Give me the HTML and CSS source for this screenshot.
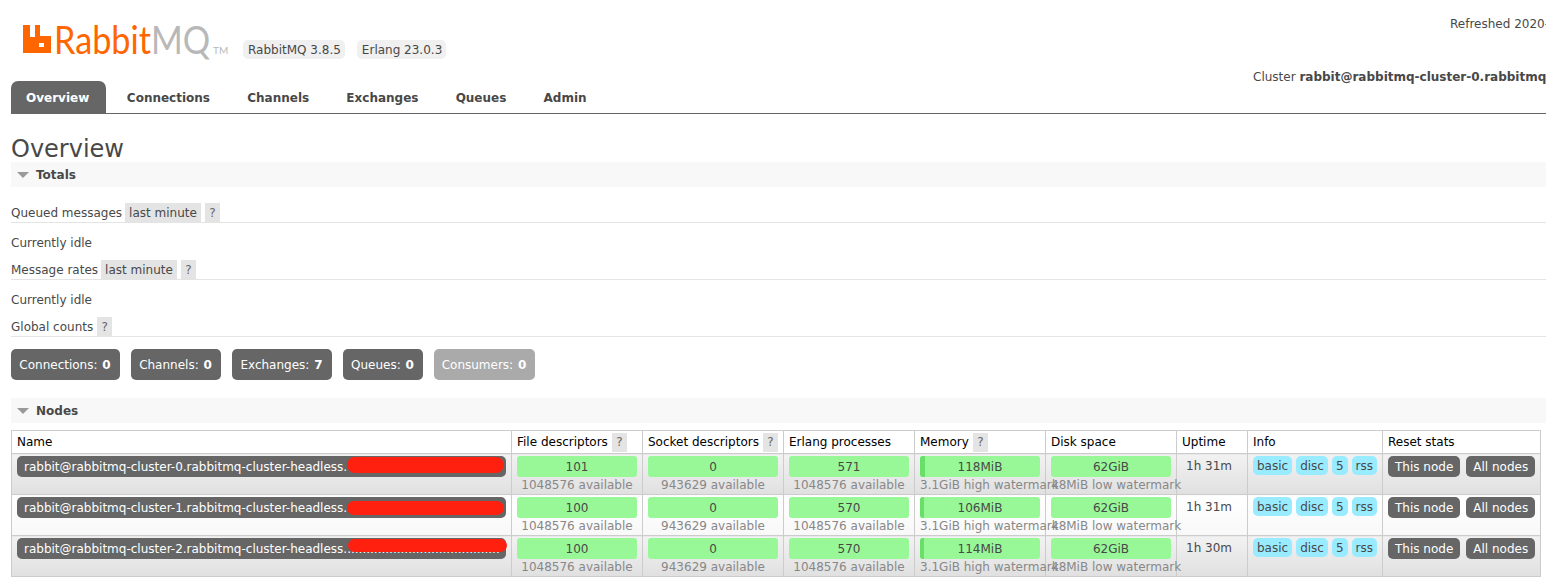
FILE: index.html
```html
<!DOCTYPE html>
<html lang="en">
<head>
<meta charset="utf-8">
<title>RabbitMQ Management</title>
<link rel="stylesheet" href="styles.css">
</head>
<body>
<div class="page">
  <header class="header">
    <div class="logo">
      <svg class="logo-icon" width="28" height="28" viewBox="0 0 28 28"><path fill="#ff6600" fill-rule="evenodd" d="M0 0h7v12h5V0h5v11h11v17H0z M16 18v4h5v-4z"/></svg>
      <span class="logo-word"><span class="logo-rabbit">Rabbit</span><span class="logo-mq">MQ</span></span><span class="logo-tm">TM</span>
    </div>
    <div class="versions">
      <span class="version">RabbitMQ 3.8.5</span>
      <span class="version">Erlang 23.0.3</span>
    </div>
    <div class="refreshed">Refreshed 2020-07-14 10:32:11</div>
  </header>
  <div class="cluster">Cluster <b>rabbit@rabbitmq-cluster-0.rabbitmq-cluster-headless</b></div>
  <nav class="tabs">
    <a class="tab active">Overview</a>
    <a class="tab">Connections</a>
    <a class="tab">Channels</a>
    <a class="tab">Exchanges</a>
    <a class="tab">Queues</a>
    <a class="tab">Admin</a>
  </nav>
  <main class="content">
    <h1 class="title">Overview</h1>
    <h2 class="section"><span class="arrow"></span>Totals</h2>
    <div class="sub first"><span>Queued messages</span><span class="tag">last minute</span><span class="help">?</span></div>
    <p class="idle">Currently idle</p>
    <div class="sub"><span>Message rates</span><span class="tag">last minute</span><span class="help">?</span></div>
    <p class="idle">Currently idle</p>
    <div class="sub"><span>Global counts</span><span class="help">?</span></div>
    <div class="counts">
      <span class="count">Connections: <b>0</b></span>
      <span class="count">Channels: <b>0</b></span>
      <span class="count">Exchanges: <b>7</b></span>
      <span class="count">Queues: <b>0</b></span>
      <span class="count light">Consumers: <b>0</b></span>
    </div>
    <h2 class="section nodes"><span class="arrow"></span>Nodes</h2>
    <table class="table">
      <colgroup>
        <col class="c-name"><col class="c-file"><col class="c-sock"><col class="c-erl"><col class="c-mem"><col class="c-disk"><col class="c-up"><col class="c-info"><col class="c-reset">
      </colgroup>
      <thead>
        <tr>
          <th>Name</th>
          <th><span>File descriptors</span><span class="help">?</span></th>
          <th><span>Socket descriptors</span><span class="help">?</span></th>
          <th>Erlang processes</th>
          <th><span>Memory</span><span class="help">?</span></th>
          <th>Disk space</th>
          <th>Uptime</th>
          <th>Info</th>
          <th>Reset stats</th>
        </tr>
      </thead>
      <tbody>
        <tr class="alt">
          <td><div class="node"><span class="node-text">rabbit@rabbitmq-cluster-0.rabbitmq-cluster-headless.</span><span class="redact r0"></span></div></td>
          <td><div class="bar">101</div><div class="sub-val">1048576 available</div></td>
          <td><div class="bar">0</div><div class="sub-val">943629 available</div></td>
          <td><div class="bar">571</div><div class="sub-val">1048576 available</div></td>
          <td><div class="bar mem"><span class="fill" style="width:5px"></span><span class="bar-label">118MiB</span></div><div class="sub-val wide">3.1GiB high watermark</div></td>
          <td><div class="bar disk">62GiB</div><div class="sub-val wide">48MiB low watermark</div></td>
          <td class="uptime">1h 31m</td>
          <td><div class="infos"><span class="info">basic</span><span class="info">disc</span><span class="info">5</span><span class="info">rss</span></div></td>
          <td><div class="resets"><span class="reset">This node</span><span class="reset">All nodes</span></div></td>
        </tr>
        <tr>
          <td><div class="node"><span class="node-text">rabbit@rabbitmq-cluster-1.rabbitmq-cluster-headless.</span><span class="redact r1"></span></div></td>
          <td><div class="bar">100</div><div class="sub-val">1048576 available</div></td>
          <td><div class="bar">0</div><div class="sub-val">943629 available</div></td>
          <td><div class="bar">570</div><div class="sub-val">1048576 available</div></td>
          <td><div class="bar mem"><span class="fill" style="width:4px"></span><span class="bar-label">106MiB</span></div><div class="sub-val wide">3.1GiB high watermark</div></td>
          <td><div class="bar disk">62GiB</div><div class="sub-val wide">48MiB low watermark</div></td>
          <td class="uptime">1h 31m</td>
          <td><div class="infos"><span class="info">basic</span><span class="info">disc</span><span class="info">5</span><span class="info">rss</span></div></td>
          <td><div class="resets"><span class="reset">This node</span><span class="reset">All nodes</span></div></td>
        </tr>
        <tr class="alt">
          <td><div class="node"><span class="node-text">rabbit@rabbitmq-cluster-2.rabbitmq-cluster-headless.........................................</span><span class="redact r2"></span></div></td>
          <td><div class="bar">100</div><div class="sub-val">1048576 available</div></td>
          <td><div class="bar">0</div><div class="sub-val">943629 available</div></td>
          <td><div class="bar">570</div><div class="sub-val">1048576 available</div></td>
          <td><div class="bar mem"><span class="fill" style="width:4px"></span><span class="bar-label">114MiB</span></div><div class="sub-val wide">3.1GiB high watermark</div></td>
          <td><div class="bar disk">62GiB</div><div class="sub-val wide">48MiB low watermark</div></td>
          <td class="uptime">1h 30m</td>
          <td><div class="infos"><span class="info">basic</span><span class="info">disc</span><span class="info">5</span><span class="info">rss</span></div></td>
          <td><div class="resets"><span class="reset">This node</span><span class="reset">All nodes</span></div></td>
        </tr>
      </tbody>
    </table>
  </main>
</div>
</body>
</html>
```
FILE: styles.css
```css
html, body { margin: 0; padding: 0; background: #fff; overflow: hidden; }
body { font: 12px "DejaVu Sans", Verdana, sans-serif; color: #484848; }
.page { width: 1546px; height: 577px; overflow: hidden; }

.header { display: flex; height: 62px; align-items: flex-start; white-space: nowrap; }
.logo { display: flex; align-items: flex-start; margin: 25px 0 0 23px; width: 220px; height: 30px; flex: none; }
.logo-icon { flex: none; margin-right: 3px; }
.logo-word { display: block; width: 155px; flex: none; transform: scaleX(0.9); transform-origin: left center; font: 400 38px/28px Lato, "Open Sans", sans-serif; }
.logo-rabbit { color: #ff6600; }
.logo-mq { color: #b8b8b8; }
.logo-tm { font: 400 10px/10px Lato, sans-serif; color: #b8b8b8; margin: 20px 0 0 4px; }
.versions { display: flex; gap: 12px; margin-top: 40px; width: 1207px; flex: none; }
.version { background: #f0f0f0; border-radius: 5px; padding: 0 4px 0 5px; line-height: 20px; height: 19px; }
.refreshed { margin-top: 17px; width: 0; }

.cluster { height: 19px; line-height: 19px; white-space: nowrap; margin: 6px 0 0 1253px; }

.tabs { display: flex; margin: -6px 0 0 11px; height: 32px; border-bottom: 1px solid #666; }
.tab { font-weight: bold; line-height: 34px; padding: 0 18.600px; color: #484848; }
.tab.active { background: #666; color: #fff; border-radius: 7px 7px 0 0; padding: 0 17px 0 15px; margin-right: 2px; }

.content { padding: 0 0 0 11px; }
.title { font-size: 24px; font-weight: normal; line-height: 26px; margin: 22px 0 0; color: #484848; }
.section { font-size: 12px; font-weight: bold; background: #f8f8f8; height: 25px; box-sizing: border-box; padding-top: 1px; margin: 0; display: flex; align-items: center; color: #484848; }
.section.nodes { margin-top: 18px; }
.arrow { width: 0; height: 0; border-left: 6px solid transparent; border-right: 6px solid transparent; border-top: 6px solid #999; margin: 0 7px 0 6px; }

.sub { display: flex; align-items: stretch; height: 19px; line-height: 21px; border-bottom: 1px solid #e4e4e4; margin-top: 7px; }
.sub.first { margin-top: 16px; }
.tag { background: #e4e4e4; padding: 0 4px; margin-left: 3px; }
.help { background: #e4e4e4; padding: 0 4px; margin-left: 4px; color: #666; width: 7px; text-align: center; }
.idle { margin: 11px 0 0; line-height: 19px; height: 19px; }

.counts { display: grid; grid-template-columns: 109px 90px 100px 80px 101px; column-gap: 11px; margin-top: 12px; }
.count { background: #666; color: #fff; border-radius: 5px; height: 31px; line-height: 33px; text-align: center; padding-right: 1px; box-sizing: border-box; }
.count b { margin-left: 1px; }
.count.light { background: #aaa; }

.table { border-collapse: collapse; table-layout: fixed; width: 1529px; margin-top: 7px; }
.c-name { width: 500px; }
.c-file { width: 131px; }
.c-sock { width: 141px; }
.c-erl, .c-mem, .c-disk { width: 131px; }
.c-up { width: 71px; }
.c-info { width: 135px; }
.c-reset { width: 158px; }
.table th, .table td { border: 1px solid #ccc; padding: 2px 5px; vertical-align: top; text-align: left; }
.table th { font-weight: normal; color: #000; height: 19px; line-height: 19px; padding: 2px 5px 1px; white-space: nowrap; }
.table th .help { display: inline-block; margin-left: 4px; margin-top: -1px; }
.table td { height: 36px; background: linear-gradient(#ffffff, #f8f8f8); }
.table tr.alt td { background: linear-gradient(#f2f2f2, #e0e0e0); }

.node { background: #666; color: #fff; border-radius: 5px; height: 21px; line-height: 23px; padding: 0 7px; position: relative; white-space: nowrap; }
.node-text { display: block; overflow: hidden; width: 475px; height: 21px; }
.redact { position: absolute; background: #ff2010; border-radius: 8px; }
.r0 { left: 330px; top: 1px; width: 157px; height: 16px; }
.r1 { left: 330px; top: 4px; width: 157px; height: 14px; }
.r2 { left: 331px; top: 1px; width: 159px; height: 13px; }

.bar { background: #98f898; border-radius: 3px; height: 21px; line-height: 23px; text-align: center; position: relative; color: #484848; overflow: hidden; }
.fill { position: absolute; left: 0; top: 0; height: 21px; background: #68e068; }
.bar-label { position: relative; }
.sub-val { color: #888; text-align: center; line-height: 17px; height: 15px; white-space: nowrap; }
.sub-val.wide { text-align: left; }
.table td.uptime { padding: 2px 5px 2px 9px; line-height: 20px; }
.infos { display: flex; gap: 4px; }
.info { background: #99ebff; border-radius: 5px; height: 19px; line-height: 21px; padding: 0 4px; }
.resets { display: flex; gap: 6px; }
.reset { background: #666; color: #fff; border-radius: 5px; height: 21px; line-height: 23px; padding: 0 7px; white-space: nowrap; }
```
